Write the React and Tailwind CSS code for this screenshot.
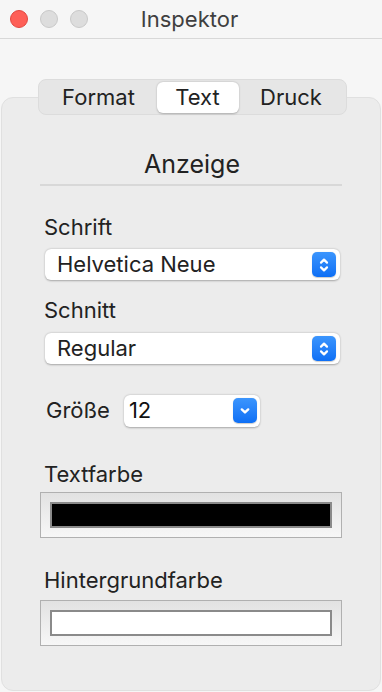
import React from 'react';

const font = { fontFamily: 'Inter, "Liberation Sans", sans-serif' };

const Stepper = ({ single }) => (
  <div className="w-[24px] h-[25px] rounded-[5px] bg-gradient-to-b from-[#3b95fd] to-[#0d6ff5] flex items-center justify-center shadow-[0_0.5px_1px_rgba(0,0,0,0.2)]">
    {single ? (
      <svg width="14" height="14" viewBox="0 0 14 14" fill="none" stroke="white" strokeWidth="2.4" strokeLinecap="round" strokeLinejoin="round">
        <path d="M3.8 5.4 L7 8.4 L10.2 5.4" />
      </svg>
    ) : (
      <svg width="14" height="20" viewBox="0 0 14 20" fill="none" stroke="white" strokeWidth="2.2" strokeLinecap="round" strokeLinejoin="round">
        <path d="M4 7.6 L7 4.6 L10 7.6" />
        <path d="M4 12.4 L7 15.4 L10 12.4" />
      </svg>
    )}
  </div>
);

const Popup = ({ value }) => (
  <div className="ml-[43px] mr-[40px] h-[31px] bg-white rounded-[6px] shadow-[0_0.5px_2px_rgba(0,0,0,0.3)] flex items-center pl-[12px] pr-[4px]">
    <span className="flex-1 text-[22px] text-[#222]">{value}</span>
    <Stepper />
  </div>
);

const Well = ({ color }) => (
  <div className="ml-[38px] mr-[38px] h-[46px] border border-[#b0b0b0] bg-gradient-to-b from-[#e2e2e2] to-[#f7f7f7] p-[9px]">
    <div className={`h-full border-2 border-[#8a8a8a] ${color}`} />
  </div>
);

const Label = ({ children, className }) => (
  <div className={`pl-[42px] text-[22px] leading-[24px] text-[#222] ${className}`}>{children}</div>
);

export default function App() {
  return (
    <div style={font} className="w-[382px] h-[692px] bg-[#f6f6f6] overflow-hidden flex flex-col">
      {/* Titelleiste */}
      <div className="h-[39px] border-b border-[#d8d8d8] flex items-center relative shrink-0">
        <div className="flex gap-[12px] pl-[10px] relative z-10">
          <span className="w-[18px] h-[18px] rounded-full bg-[#fe5f57] border border-[#e2463f]" />
          <span className="w-[18px] h-[18px] rounded-full bg-[#dddddd] border border-[#c9c9c9]" />
          <span className="w-[18px] h-[18px] rounded-full bg-[#dddddd] border border-[#c9c9c9]" />
        </div>
        <div className="absolute inset-0 flex items-center justify-center text-[22px] text-[#3f3f3f] pr-[3px]">
          Inspektor
        </div>
      </div>

      {/* Tabs */}
      <div className="pt-[40px] flex justify-center relative z-10 pl-[2px]">
        <div className="w-[309px] h-[36px] rounded-[8px] bg-[#e6e6e6] border border-[#dcdcdc] flex items-center px-[2px] text-[22px] text-[#222]">
          <div className="w-[116px] text-center">Format</div>
          <div className="w-[82px] h-[31px] bg-white rounded-[6px] shadow-[0_0.5px_2px_rgba(0,0,0,0.25)] flex items-center justify-center">Text</div>
          <div className="flex-1 text-center">Druck</div>
        </div>
      </div>

      {/* Box */}
      <div className="mt-[-18px] mx-[1px] flex-1 mb-[1px] rounded-[12px] bg-[#ececec] border border-[#e0e0e0] pt-[52px]">
        <div className="text-center text-[25px] leading-[28px] text-[#222] pl-[2px]">Anzeige</div>
        <div className="mt-[6px] ml-[38px] mr-[38px] h-[2px] bg-[#d8d8d8]" />

        <Label className="mt-[29px]">Schrift</Label>
        <div className="mt-[10px]"><Popup value="Helvetica Neue" /></div>

        <Label className="mt-[18px]">Schnitt</Label>
        <div className="mt-[11px]"><Popup value="Regular" /></div>

        <div className="mt-[30px] flex items-center">
          <span className="pl-[44px] text-[22px] text-[#222]">Größe</span>
          <div className="ml-[14px] w-[136px] h-[32px] bg-white rounded-[6px] shadow-[0_0.5px_2px_rgba(0,0,0,0.3)] flex items-center pl-[5px] pr-[3px]">
            <span className="flex-1 text-[22px] text-[#111]">12</span>
            <Stepper single />
          </div>
        </div>

        <Label className="mt-[35px]">Textfarbe</Label>
        <div className="mt-[6px]"><Well color="bg-black" /></div>

        <Label className="mt-[30px]">Hintergrundfarbe</Label>
        <div className="mt-[8px]"><Well color="bg-white" /></div>
      </div>
    </div>
  );
}
